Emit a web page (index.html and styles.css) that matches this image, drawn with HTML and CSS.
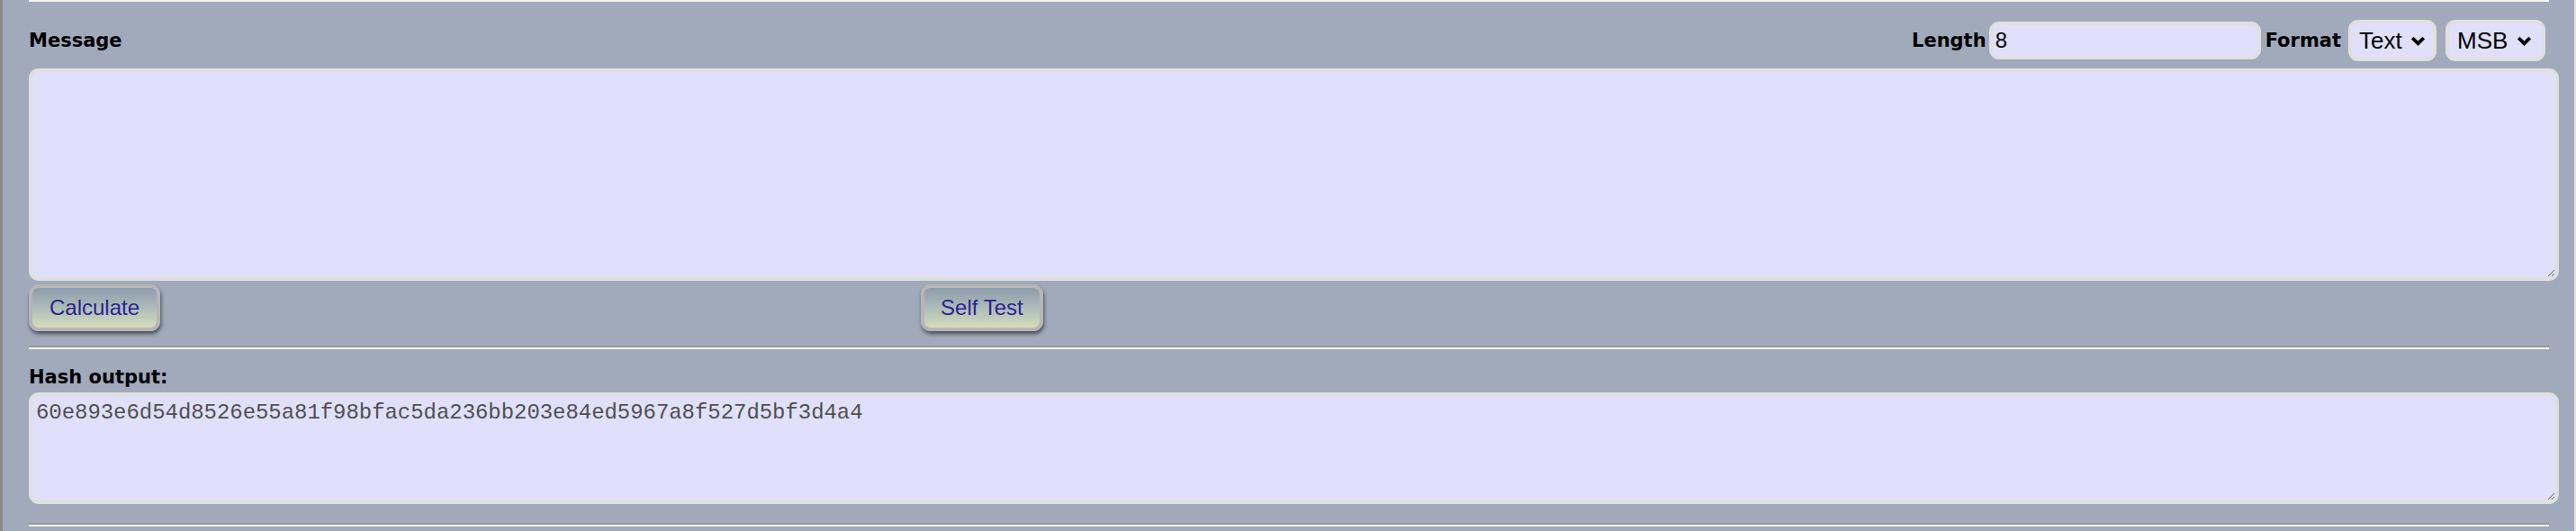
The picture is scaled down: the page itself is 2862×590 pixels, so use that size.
FILE: index.html
```html
<!DOCTYPE html>
<html lang="en">
<head>
<meta charset="utf-8">
<title>Hash calculator</title>
<link rel="stylesheet" href="styles.css">
</head>
<body>
<div class="page">
  <div class="rule-tail"></div>

  <div class="msg-head">
    <label class="lbl" for="msg">Message</label>
    <div class="controls">
      <label class="lbl lbl-len" for="len">Length</label>
      <input id="len" class="len-input" type="text" value="8">
      <span class="lbl lbl-fmt">Format</span>
      <span class="sel">
        <select class="sel-native"><option>Text</option><option>Hex</option></select>
        <svg class="chev" width="17" height="11" viewBox="0 0 17 11"><polyline points="2.2,2.2 8.5,8.3 14.8,2.2" fill="none" stroke="#000" stroke-width="3.8"/></svg>
      </span>
      <span class="sel sel-msb">
        <select class="sel-native"><option>MSB</option><option>LSB</option></select>
        <svg class="chev" width="17" height="11" viewBox="0 0 17 11"><polyline points="2.2,2.2 8.5,8.3 14.8,2.2" fill="none" stroke="#000" stroke-width="3.8"/></svg>
      </span>
    </div>
  </div>

  <textarea id="msg" class="box box-msg"></textarea>

  <div class="btn-row">
    <button class="btn">Calculate</button>
    <button class="btn btn-self">Self Test</button>
  </div>

  <hr class="rule">

  <div class="lbl lbl-out">Hash output:</div>
  <textarea class="box box-out" readonly>60e893e6d54d8526e55a81f98bfac5da236bb203e84ed5967a8f527d5bf3d4a4</textarea>

  <hr class="rule rule-bottom">
</div>
</body>
</html>
```

FILE: styles.css
```css
html, body {
  margin: 0;
  padding: 0;
  background: #a0aabb;
}

.page {
  box-sizing: border-box;
  min-height: 590px;
  border-left: 3px solid #8b8c8a;
  border-right: 2px solid #e2e2e2;
  padding: 0 17px 0 29px;
  background: #a0aabb;
  overflow: hidden;
}

.rule-tail {
  height: 2px;
  background: #f3f3f3;
  margin-right: 11px;
}

.lbl {
  font-family: "DejaVu Sans", Verdana, sans-serif;
  font-weight: bold;
  font-size: 21px;
  line-height: 24px;
  color: #000;
}

.msg-head {
  display: flex;
  justify-content: space-between;
  align-items: center;
  height: 46px;
  margin-top: 20px;
  margin-bottom: 8px;
}

.controls {
  display: flex;
  align-items: center;
  padding-right: 15px;
}

.lbl-len {
  margin-right: 3px;
}

.lbl-fmt {
  margin-left: 5px;
  margin-right: 8px;
}

.len-input {
  box-sizing: border-box;
  width: 302px;
  height: 42px;
  border: 4px solid #e0e0e0;
  border-radius: 11px;
  background: #e0e0fa;
  padding: 0 3px;
  font-family: "Liberation Sans", Arial, sans-serif;
  font-size: 24px;
  color: #000;
  outline: none;
}

.sel {
  box-sizing: border-box;
  display: inline-flex;
  align-items: center;
  height: 46px;
  border: 4px solid #e0e0e0;
  border-radius: 11px;
  background: #e0e0fa;
  padding: 0 8px;
  gap: 9px;
}

.sel-msb {
  margin-left: 10px;
  padding-left: 9px;
  padding-right: 11px;
}

.sel-native {
  appearance: none;
  -webkit-appearance: none;
  border: none;
  background: transparent;
  padding: 0;
  margin: 0;
  font-family: "Liberation Sans", Arial, sans-serif;
  font-size: 26px;
  color: #000;
  outline: none;
}

.chev {
  display: block;
  pointer-events: none;
}

.box {
  display: block;
  box-sizing: border-box;
  width: 100%;
  margin: 0;
  border: 4px solid #e0e0e0;
  border-radius: 11px;
  background: #e0e0fa;
  outline: none;
}

.box-msg {
  height: 236px;
}

.box-out {
  height: 124px;
  padding: 5px 4px 4px;
  font-family: "Liberation Mono", "Courier New", monospace;
  font-size: 24px;
  letter-spacing: -0.05px;
  color: #505050;
}

.btn-row {
  display: flex;
  margin-top: 4px;
}

.btn {
  box-sizing: border-box;
  height: 52px;
  padding: 0 19px;
  border: 4px solid #b6b6b6;
  border-radius: 11px;
  background: linear-gradient(to bottom, #8c9bad 0%, #b1bfb8 55%, #d3ddbb 100%);
  box-shadow: 1px 3px 4px rgba(0, 0, 0, 0.55);
  font-family: "Liberation Sans", Arial, sans-serif;
  font-size: 24px;
  color: #2c2294;
}

.btn-self {
  margin-left: 845px;
  padding: 0 18px;
}

.rule {
  height: 0;
  margin: 16px 11px 0 0;
  border: none;
  border-top: 2px solid #979797;
  border-bottom: 2px solid #f5f5f5;
}

.lbl-out {
  margin-top: 19px;
  margin-bottom: 5px;
}

.rule-bottom {
  margin-top: 21px;
}
```
